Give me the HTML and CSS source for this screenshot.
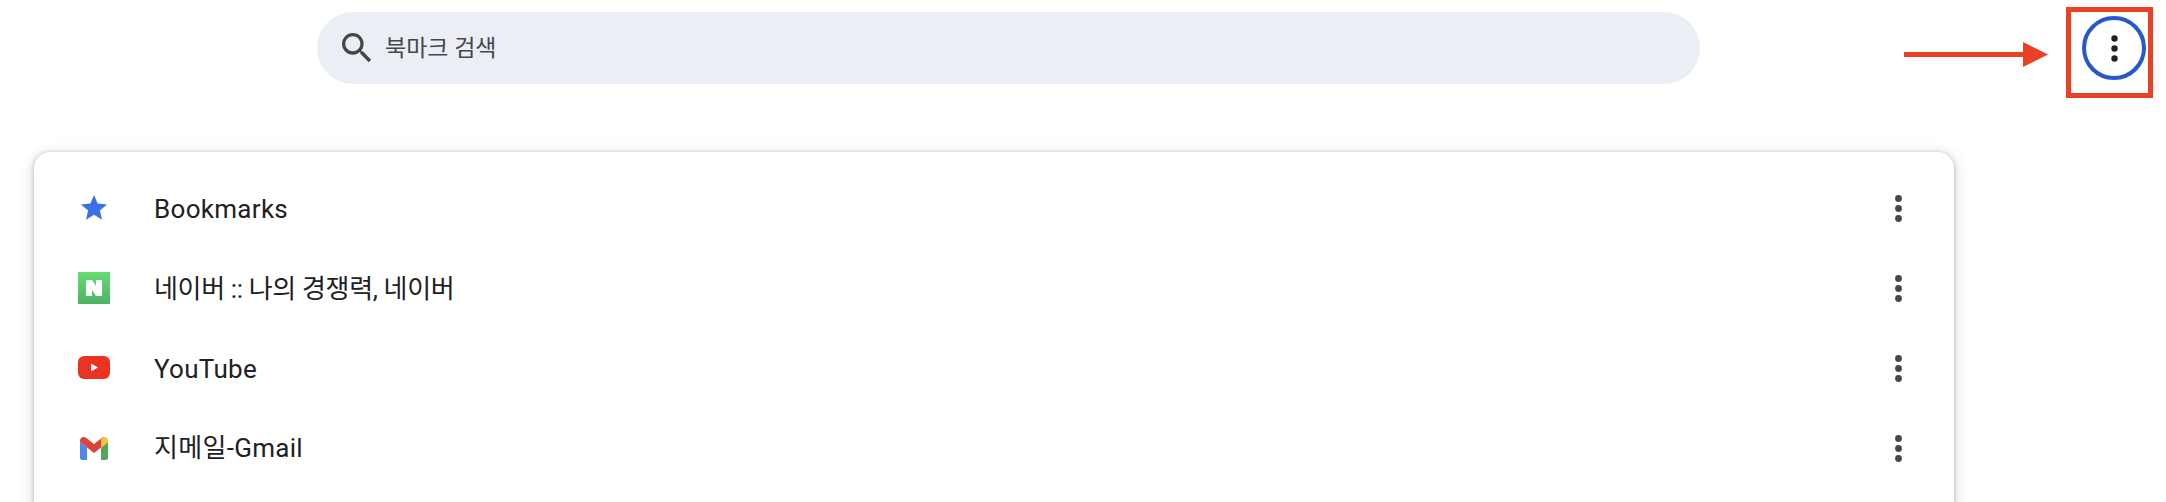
FILE: index.html
```html
<!DOCTYPE html>
<html lang="ko">
<head>
    <meta charset="UTF-8">
    <meta name="viewport" content="width=device-width, initial-scale=1.0">
    <title>북마크</title>
    <link rel="stylesheet" href="styles.css">
</head>
<body>
    <header class="toolbar">
        <div class="search">
            <svg class="search-icon" viewBox="0 0 24 24"><path d="M15.5 14h-.79l-.28-.27A6.47 6.47 0 0 0 16 9.5 6.5 6.5 0 1 0 9.5 16c1.61 0 3.09-.59 4.23-1.57l.27.28v.79l5 4.99L20.49 19l-4.99-5zm-6 0C7.01 14 5 11.99 5 9.5S7.01 5 9.5 5 14 7.01 14 9.5 11.99 14 9.5 14z"/></svg>
            <span class="search-label">북마크 검색</span>
        </div>
    </header>

    <!-- red callout pointing at the menu button -->
    <div class="callout-arrow">
        <svg viewBox="0 0 144 25" width="144" height="25"><path d="M0 10h119V0l25 12.5L119 25V15H0z"/></svg>
    </div>
    <div class="callout-box">
        <div class="menu-ring">
            <svg class="dots" viewBox="0 0 7 27"><circle cx="3.5" cy="3.5" r="3.2"/><circle cx="3.5" cy="13.5" r="3.2"/><circle cx="3.5" cy="23.5" r="3.2"/></svg>
        </div>
    </div>

    <main class="card">
        <div class="row">
            <svg class="favicon" viewBox="-0.3 -0.3 24.6 24.6"><path fill="#3b71e6" d="M12 17.27L18.18 21l-1.64-7.03L22 9.24l-7.19-.61L12 2 9.19 8.63 2 9.24l5.46 4.73L5.82 21z"/></svg>
            <span class="title">Bookmarks</span>
            <svg class="dots row-dots" viewBox="0 0 7 27"><circle cx="3.5" cy="3.5" r="3.4"/><circle cx="3.5" cy="13.5" r="3.4"/><circle cx="3.5" cy="23.5" r="3.4"/></svg>
        </div>
        <div class="row">
            <svg class="favicon" viewBox="0 0 32 32">
                <defs><linearGradient id="naver" x1="0" y1="0" x2="0" y2="1"><stop offset="0" stop-color="#66dc74"/><stop offset="1" stop-color="#4fb266"/></linearGradient></defs>
                <rect width="32" height="32" fill="url(#naver)"/>
                <path fill="#fff" d="M8 8h6l4 6V8h6v16h-6l-4-6v6H8z"/>
            </svg>
            <span class="title title-ko">네이버 :: 나의 경쟁력, 네이버</span>
            <svg class="dots row-dots" viewBox="0 0 7 27"><circle cx="3.5" cy="3.5" r="3.4"/><circle cx="3.5" cy="13.5" r="3.4"/><circle cx="3.5" cy="23.5" r="3.4"/></svg>
        </div>
        <div class="row">
            <svg class="favicon" viewBox="0 0 32 32">
                <rect x="0" y="4" width="32" height="23" rx="6" fill="#ea3323"/>
                <path fill="#fff" d="M13 11.5l7 4-7 4z"/>
            </svg>
            <span class="title">YouTube</span>
            <svg class="dots row-dots" viewBox="0 0 7 27"><circle cx="3.5" cy="3.5" r="3.4"/><circle cx="3.5" cy="13.5" r="3.4"/><circle cx="3.5" cy="23.5" r="3.4"/></svg>
        </div>
        <div class="row">
            <svg class="favicon" viewBox="0 0 32 32">
                <path fill="#4f86ec" d="M2 10l7 5.500V28H4.500A2.500 2.500 0 0 1 2 25.500z"/>
                <path fill="#57a55c" d="M30 10l-7 5.500V28h4.500a2.500 2.500 0 0 0 2.500-2.500z"/>
                <path fill="#d8443a" d="M2 9c0-4 3.500-5 6-3.200L16 12l8-6.200c1-.8 2-1 3-.8l-4 10.500-7 5.500-7-5.500-7-5.500z"/>
                <path fill="#f4c23e" d="M23 7.500l1-1.700c2.500-1.800 6-.8 6 3.200v1l-7 5.500z"/>
            </svg>
            <span class="title title-mixed">지메일-Gmail</span>
            <svg class="dots row-dots" viewBox="0 0 7 27"><circle cx="3.5" cy="3.5" r="3.4"/><circle cx="3.5" cy="13.5" r="3.4"/><circle cx="3.5" cy="23.5" r="3.4"/></svg>
        </div>
    </main>
</body>
</html>
```

FILE: styles.css
```css
html, body {
    height: 100%;
}
body {
    margin: 0;
    overflow: hidden;
    background-color: #fff;
    color: #202124;
    font-family: Roboto, "Noto Sans CJK KR", sans-serif;
}
.toolbar {
    display: flex;
    padding: 12px 0 0 317px;
}
.search {
    display: flex;
    align-items: center;
    width: 1383px;
    height: 72px;
    padding-left: 20px;
    box-sizing: border-box;
    border-radius: 36px;
    background-color: #ebeef5;
}
.search-icon {
    width: 40px;
    height: 40px;
    fill: #444746;
}
.search-label {
    margin-left: 8px;
    margin-bottom: 4px;
    font-size: 23px;
    color: #474747;
}
.callout-arrow {
    position: absolute;
    left: 1904px;
    top: 42px;
    height: 25px;
}
.callout-arrow svg {
    display: block;
    fill: #ea4025;
}
.callout-box {
    position: absolute;
    left: 2066px;
    top: 7px;
    width: 87px;
    height: 91px;
    box-sizing: border-box;
    border: 5px solid #ea4025;
}
.menu-ring {
    position: absolute;
    left: 11px;
    top: 4px;
    width: 64px;
    height: 64px;
    box-sizing: border-box;
    border: 4px solid #2757cc;
    border-radius: 50%;
    display: flex;
    align-items: center;
    justify-content: center;
}
.dots {
    width: 7px;
    height: 27px;
    fill: #202124;
}
.card {
    margin: 68px 0 0 34px;
    width: 1920px;
    height: 400px;
    padding-top: 16px;
    box-sizing: border-box;
    background: #fff;
    border-radius: 16px;
    box-shadow: 0 1px 4px rgba(60,64,67,0.35), 0 3px 12px 4px rgba(60,64,67,0.12);
}
.row {
    display: flex;
    align-items: center;
    height: 80px;
    padding-left: 44px;
}
.favicon {
    width: 32px;
    height: 32px;
    flex: none;
}
.title {
    margin-left: 44px;
    margin-top: 2px;
    font-size: 26px;
    letter-spacing: 0.3px;
    flex: 1;
}
.title-ko {
    margin-top: 0;
    margin-bottom: 4px;
    letter-spacing: -0.35px;
}
.title-mixed {
    margin-top: 0;
    margin-bottom: 6px;
}
.row-dots {
    margin-right: 52px;
    fill: #474747;
}
```
